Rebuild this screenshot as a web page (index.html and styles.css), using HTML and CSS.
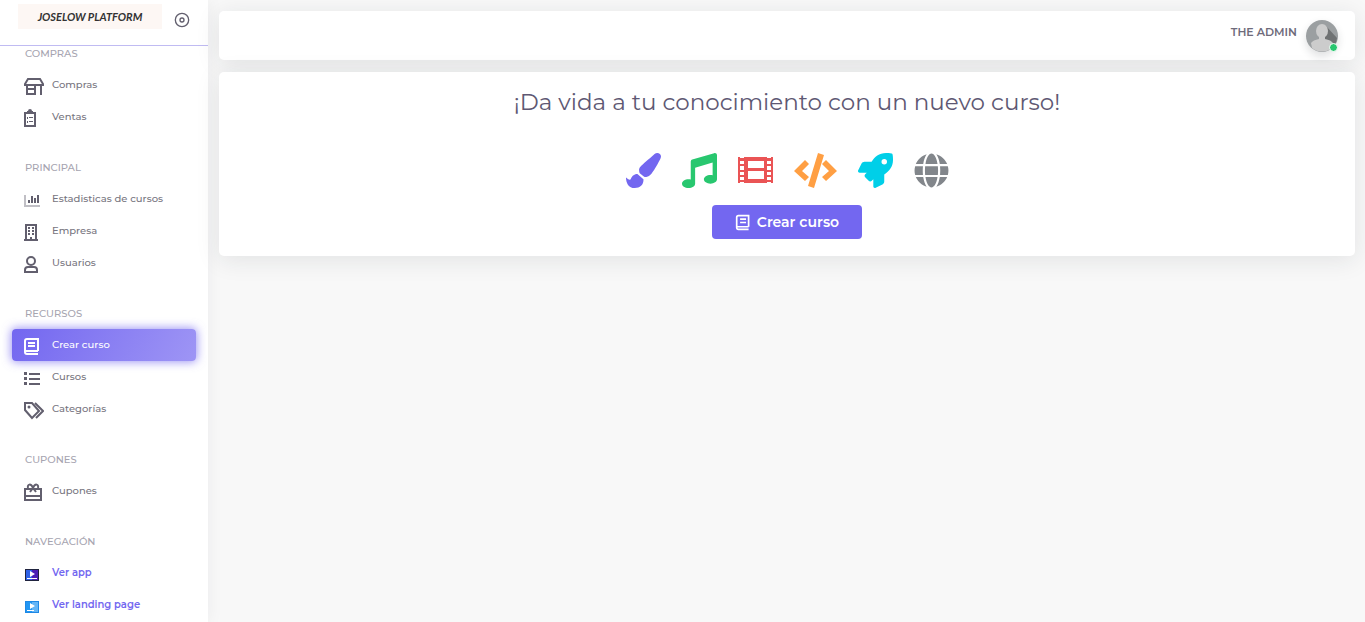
FILE: index.html
```html
<!DOCTYPE html>
<html lang="es">
<head>
    <meta charset="UTF-8">
    <meta name="viewport" content="width=device-width, initial-scale=1.0">
    <title>Crear curso - Joselow Platform</title>
    <link rel="stylesheet" href="styles.css">
</head>
<body>
    <aside class="sidebar">
        <div class="sidebar-header">
            <a class="logo" href="#">JOSELOW PLATFORM</a>
            <button type="button" class="toggle" aria-label="Fijar menú">
                <svg viewBox="0 0 24 24"><circle cx="12" cy="12" r="10"/><circle cx="12" cy="12" r="3"/></svg>
            </button>
        </div>

        <nav>
            <h2>COMPRAS</h2>
            <ul>
                <li><a href="#">
                    <svg viewBox="0 0 20 20"><path d="M4 2h12l3 5v1H1V7zM3 8v9h8V8M3 12h8M17 8v10"/></svg>
                    <span>Compras</span>
                </a></li>
                <li><a href="#">
                    <svg viewBox="0 0 20 20"><path d="M1 4h10v13H1z"/><path class="solid" d="M3 2h1a2 2 0 0 1 4 0h1v3H3zM3 8h1v2H3zM3 12h1v2H3zM5 8h4v1H5zM5 12h4v1H5z"/></svg>
                    <span>Ventas</span>
                </a></li>
            </ul>

            <h2>PRINCIPAL</h2>
            <ul>
                <li><a href="#">
                    <svg viewBox="0 0 20 20"><path class="solid light" d="M0 4h2v10h14v2H0z"/><path class="solid" d="M4 9h2v3H4zM7 5h2v7H7zM10 7h2v5h-2zM13 4h2v8h-2z"/></svg>
                    <span>Estadisticas de cursos</span>
                </a></li>
                <li><a href="#">
                    <svg viewBox="0 0 20 20"><path d="M2 2h10v15H2zM0 17h14"/><path class="solid" d="M4 4h2v2H4zM8 4h2v2H8zM4 7h2v2H4zM8 7h2v2H8zM4 10h2v2H4zM8 10h2v2H8zM6 14h2v3H6z"/></svg>
                    <span>Empresa</span>
                </a></li>
                <li><a href="#">
                    <svg viewBox="0 0 20 20"><circle cx="7" cy="6" r="4"/><path d="M4 12h6q3 0 3 3v2H1v-2q0-3 3-3z"/></svg>
                    <span>Usuarios</span>
                </a></li>
            </ul>

            <h2>RECURSOS</h2>
            <ul>
                <li><a class="active" href="#">
                    <svg viewBox="0 0 20 20"><path d="M14 14V2H3Q1 2 1 4v11q0 2 2 2h11M1 14h13M4 6h7M4 9h7"/></svg>
                    <span>Crear curso</span>
                </a></li>
                <li><a href="#">
                    <svg viewBox="0 0 20 20"><path class="solid" d="M0 3h3v3H0zM0 8h3v3H0zM0 13h3v3H0zM5 4h11v2H5zM5 9h11v2H5zM5 14h11v2H5z"/></svg>
                    <span>Cursos</span>
                </a></li>
                <li><a href="#">
                    <svg viewBox="0 0 20 20"><path d="M1 2h7l7 8-7 7-7-8zM11 2l8 8-7 7"/><circle class="solid" cx="5" cy="6" r="1.5"/></svg>
                    <span>Categorías</span>
                </a></li>
            </ul>

            <h2>CUPONES</h2>
            <ul>
                <li><a href="#">
                    <svg viewBox="0 0 20 20"><path d="M1 6h16v11H1zM1 13h16M9 5C7 0 3 1 4 5M9 5c2-5 6-4 5 0M6 9l3-4 3 4"/></svg>
                    <span>Cupones</span>
                </a></li>
            </ul>

            <h2>NAVEGACIÓN</h2>
            <ul class="external">
                <li><a href="#">
                    <svg viewBox="0 0 20 20"><path fill="#20243f" d="M1 4h14v12H1z"/><path fill="#2f62e8" d="M2 5h6v10H2z"/><path fill="#4b1fb4" d="M8 5h6v10H8z"/><path fill="#fff" d="M6 6l5 3-5 3zM3 13h10v1H3z"/></svg>
                    <span>Ver app</span>
                </a></li>
                <li><a href="#">
                    <svg viewBox="0 0 20 20"><path fill="#1e88e5" d="M1 4h14v12H1z"/><path fill="#2196f3" d="M2 5h6v10H2z"/><path fill="#64b5f6" d="M8 5h6v10H8z"/><path fill="#fff" d="M6 6l5 3-5 3zM3 13h7v1H3z"/></svg>
                    <span>Ver landing page</span>
                </a></li>
            </ul>
        </nav>
    </aside>

    <div class="content">
        <header class="navbar">
            <span class="user-name">THE ADMIN</span>
            <div class="avatar">
                <svg viewBox="0 0 32 32">
                    <circle cx="16" cy="16" r="16" fill="#9b9fa1"/>
                    <path fill="#6f7273" d="M20 6l11 12a16 16 0 0 1-5 10L15 22z"/>
                    <ellipse cx="16" cy="11" rx="6" ry="7" fill="#ccc"/>
                    <path fill="#ccc" d="M13 15h6v4q6 1 8 4l-1 5a16 16 0 0 1-20 0l-1-5q2-3 8-4z"/>
                </svg>
                <span class="status"></span>
            </div>
        </header>

        <main class="card">
            <h1>¡Da vida a tu conocimiento con un nuevo curso!</h1>

            <div class="topics">
                <svg class="primary" viewBox="0 0 512 512"><path d="M167 309c-40 3-76 18-97 73-2 6-8 10-15 10-11 0-45-28-55-35 0 83 38 155 128 155 76 0 128-44 128-120 0-3-1-6-1-9zM458 0c-15 0-29 7-40 16C213 199 192 203 192 257c0 14 3 27 9 39l64 53c7 2 14 3 22 3 62 0 98-45 211-256 7-15 14-30 14-46C512 21 486 0 458 0z"/></svg>
                <svg class="success" viewBox="0 0 512 512"><path d="M512 32c0-22-21-37-42-30L150 96c-13 4-22 17-22 31v261c-10-2-21-4-32-4-53 0-96 29-96 64s43 64 96 64 96-29 96-64V214l256-75v185c-10-2-21-4-32-4-53 0-96 29-96 64s43 64 96 64 96-29 96-64z"/></svg>
                <svg class="danger" viewBox="0 0 35 35"><path fill-rule="evenodd" d="M0 4h2v1h4V4h23v1h4V4h2v26h-2v-1h-4v1H6v-1H2v1H0zM10 8v7h16V8zM10 18v8h16v-8zM2 8v3h4V8zM2 13v4h4v-4zM2 19v3h4v-3zM2 24v3h4v-3zM29 8v3h4V8zM29 13v4h4v-4zM29 19v3h4v-3zM29 24v3h4v-3z"/></svg>
                <svg class="warning wide" viewBox="0 0 43 35"><path d="M24 0l6 2-10 33-6-2zM11 7l4 4-7 7 7 6-4 4L0 18zM32 7l11 11-11 10-4-4 7-6-7-7z"/></svg>
                <svg class="info" viewBox="0 0 512 512"><path fill-rule="evenodd" d="M505 19c-1-5-7-11-12-12C461 0 436 0 410 0 307 0 245 55 199 128H95c-16 0-36 12-43 26L3 253c-9 18 3 35 21 35h104l-23 22c-11 12-13 33 0 46l51 51c11 11 32 13 46 0l22-23v104c0 18 17 30 35 21l98-49c15-7 27-26 27-43V313c72-47 128-109 128-211 0-26 0-51-7-83zM384 168a40 40 0 1 1 0-80 40 40 0 0 1 0 80z"/></svg>
                <svg class="secondary" viewBox="0 0 496 512"><path d="M336 160C322 71 288 8 248 8s-74 63-88 152zM152 256c0 22 1 44 3 64h186c2-20 3-42 3-64s-1-44-3-64H155c-2 20-3 42-3 64zM477 160C448 92 390 40 319 18c24 34 41 85 50 142zM177 18C106 40 48 92 19 160h108c9-57 26-108 50-142zM487 192H373c4 43 4 85 0 128h114c12-43 12-85 0-128zM120 256c0-21 1-43 3-64H9c-12 43-12 85 0 128h114c-2-21-3-43-3-64zM160 352c14 89 48 152 88 152s74-63 88-152zM319 494c71-22 129-74 158-142H369c-9 57-26 108-50 142zM19 352c29 68 87 120 158 142-24-34-41-85-50-142z"/></svg>
            </div>

            <button type="button" class="btn">
                <svg viewBox="0 0 20 20"><path d="M16 15V2H4Q2 2 2 4v12q0 2 2 2h12M2 15h14M6 6h7M6 10h7"/></svg>
                Crear curso
            </button>
        </main>
    </div>
</body>
</html>
```

FILE: styles.css
```css
* {
    box-sizing: border-box;
}

body {
    display: flex;
    min-height: 100vh;
    margin: 0;
    font-family: Montserrat, Inter, sans-serif;
    font-size: 10px;
    font-weight: 500;
    color: #5e5873;
    background-color: #f8f8f8;
}

a {
    color: inherit;
    text-decoration: none;
}

h1, h2, ul {
    margin: 0;
    padding: 0;
    font-weight: 500;
}

ul {
    list-style: none;
}

/* Menú lateral */
.sidebar {
    flex: 0 0 208px;
    background-color: #fff;
    box-shadow: 0 0 16px rgba(34, 41, 47, 0.06);
}

.sidebar-header {
    display: flex;
    align-items: flex-start;
    justify-content: space-between;
    height: 46px;
    padding: 4px 18px 0;
    border-bottom: 1px solid #c0bbf2;
}

.logo {
    width: 144px;
    line-height: 25px;
    text-align: center;
    font-family: Lato, sans-serif;
    font-size: 11px;
    font-style: italic;
    font-weight: 700;
    color: #333;
    background-color: #fdf7f4;
}

.toggle {
    height: 32px;
    padding: 0;
    border: 0;
    background: none;
    cursor: pointer;
}

.toggle svg {
    display: block;
    width: 16px;
    height: 16px;
    fill: none;
    stroke: #625f6e;
    stroke-width: 2;
}

nav h2 {
    padding-left: 25px;
    margin-bottom: 8px;
    font-size: 10px;
    line-height: 15px;
    color: #a6a4b0;
}

nav ul {
    padding: 0 12px;
    margin-bottom: 27px;
}

nav ul:last-child {
    margin-bottom: 0;
}

nav li a {
    display: flex;
    align-items: center;
    height: 32px;
    padding-left: 12px;
    border-radius: 4px;
    color: #777580;
}

nav li span {
    padding-bottom: 2px;
}

nav svg {
    width: 20px;
    height: 20px;
    margin: 4px 8px 0 0;
}

nav svg, .btn svg {
    fill: none;
    stroke: #625f6e;
    stroke-width: 2;
}

nav .solid {
    fill: #625f6e;
    stroke: none;
}

nav .light {
    fill: #c0bfc5;
}

nav .active {
    color: #fff;
    background: linear-gradient(118deg, #7367f0, #9e95f5);
    box-shadow: 0 0 10px 1px rgba(115, 103, 240, 0.7);
}

nav .active svg, .btn svg {
    stroke: #fff;
}

nav .external a {
    font-weight: 600;
    color: #7367f0;
}

nav .external svg {
    stroke: none;
}

/* Contenido */
.content {
    flex: 1;
    padding: 11px 10px 11px 11px;
}

.navbar, .card {
    border-radius: 5px;
    background-color: #fff;
    box-shadow: 0 4px 24px rgba(34, 41, 47, 0.1);
}

.navbar {
    display: flex;
    justify-content: flex-end;
    height: 49px;
    margin-bottom: 12px;
    padding: 9px 17px 0;
}

.user-name {
    margin-right: 9px;
    font-size: 11px;
    line-height: 24px;
    font-weight: 600;
    color: #6e6b7b;
}

.avatar {
    position: relative;
    width: 32px;
    height: 32px;
    border-radius: 50%;
    box-shadow: 0 4px 8px rgba(34, 41, 47, 0.15);
}

.avatar svg {
    display: block;
}

.status {
    position: absolute;
    right: 0;
    bottom: 0;
    width: 9px;
    height: 9px;
    border: 1px solid #fff;
    border-radius: 50%;
    background-color: #28c76f;
}

.card {
    display: flex;
    flex-direction: column;
    align-items: center;
    padding: 16px 17px 17px;
}

.card h1 {
    font-size: 23px;
    font-weight: 400;
    line-height: 28px;
    text-align: center;
}

.topics {
    display: flex;
    gap: 21px;
    margin: 37px 0 17px;
}

.topics svg {
    width: 35px;
    height: 35px;
}

.topics .wide {
    width: 43px;
}

.primary { fill: #7367f0; }
.success { fill: #28c76f; }
.danger { fill: #ea5455; }
.warning { fill: #ff9f43; }
.info { fill: #00cfe8; }
.secondary { fill: #82868b; }

.btn {
    display: flex;
    align-items: center;
    justify-content: center;
    gap: 5px;
    width: 150px;
    height: 34px;
    padding: 0;
    border: 0;
    border-radius: 4px;
    font-family: inherit;
    font-size: 14px;
    font-weight: 600;
    color: #fff;
    background-color: #7367f0;
    cursor: pointer;
}

.btn svg {
    width: 17px;
    height: 17px;
}
```
